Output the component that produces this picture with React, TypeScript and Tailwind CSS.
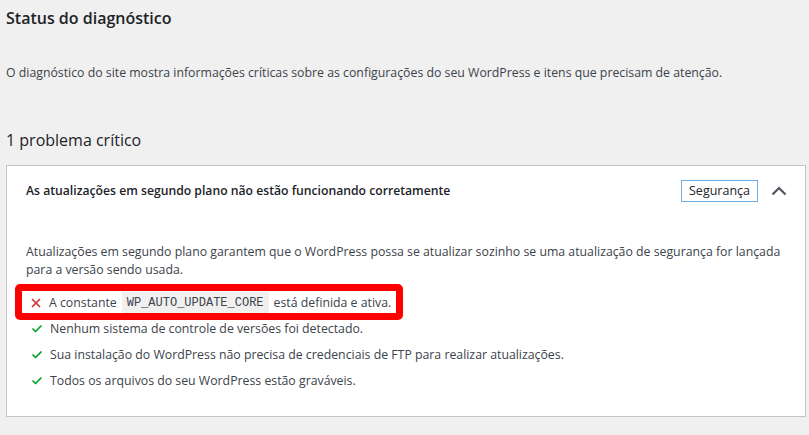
import { Check, X } from "lucide-react";

const items = [
  "Nenhum sistema de controle de versões foi detectado.",
  "Sua instalação do WordPress não precisa de credenciais de FTP para realizar atualizações.",
  "Todos os arquivos do seu WordPress estão graváveis.",
];

function ChevronUp() {
  return (
    <svg width="16" height="10" viewBox="0 0 16 10" className="text-[#50575e]">
      <path d="M1.5 8.5 L8 2 L14.5 8.5" fill="none" stroke="currentColor" strokeWidth="2.2" />
    </svg>
  );
}

export default function App() {
  return (
    <div
      className="w-[809px] min-h-[435px] bg-[#f0f0f1] pl-[6px] pr-[3px] pt-[6px] pb-[19px] text-[#3c434a]"
      style={{ fontFamily: '"Open Sans", "Noto Sans", sans-serif' }}
    >
      <h1 className="text-[16px] leading-[24px] font-semibold text-[#1d2327]">
        Status do diagnóstico
      </h1>
      <p className="mt-[34px] text-[12.3px] leading-[18px]">
        O diagnóstico do site mostra informações críticas sobre as configurações do seu WordPress e itens que precisam de atenção.
      </p>
      <h2 className="mt-[46px] text-[16px] leading-[24px] text-[#1d2327]">1 problema crítico</h2>

      <div className="mt-[13px] border border-[#c3c4c7] bg-white">
        <div className="flex h-[49px] items-center pl-[19px] pr-[18px] pt-[1px]">
          <span className="flex-1 text-[12.2px] font-semibold text-[#1d2327]">
            As atualizações em segundo plano não estão funcionando corretamente
          </span>
          <span className="flex h-[22px] items-center border border-[#72aee6] px-[7px] text-[12.5px] text-[#1d2327]">
            Segurança
          </span>
          <span className="ml-[13px] flex w-[16px] items-center justify-center">
            <ChevronUp />
          </span>
        </div>

        <div className="pl-[19px] pr-[18px] pt-[28px] pb-[22px]">
          <p className="text-[12.3px] leading-[18px]">
            Atualizações em segundo plano garantem que o WordPress possa se atualizar sozinho se uma atualização de segurança for lançada para a versão sendo usada.
          </p>
          <ul className="mt-[11px] text-[12.3px]">
            <li className="relative flex h-[26px] items-center">
              <span className="absolute left-[-11px] top-[-6px] h-[36px] w-[388px] rounded-[5px] border-[7px] border-[#ff0000]" />
              <X className="ml-[3px] h-[14px] w-[14px] text-[#d63638]" strokeWidth={3} />
              <span className="ml-[6px]">A constante</span>
              <code
                className="ml-[5px] bg-[#f0f0f1] px-[5px] py-[3px] text-[12px] leading-[16px] text-[#3c434a]"
                style={{ fontFamily: '"Liberation Mono", monospace' }}
              >
                WP_AUTO_UPDATE_CORE
              </code>
              <span className="ml-[5px]">está definida e ativa.</span>
            </li>
            {items.map((t) => (
              <li key={t} className="flex h-[26px] items-center">
                <Check className="ml-[5px] h-[12px] w-[12px] text-[#00a32a]" strokeWidth={3.5} />
                <span className="ml-[7px]">{t}</span>
              </li>
            ))}
          </ul>
        </div>
      </div>
    </div>
  );
}
